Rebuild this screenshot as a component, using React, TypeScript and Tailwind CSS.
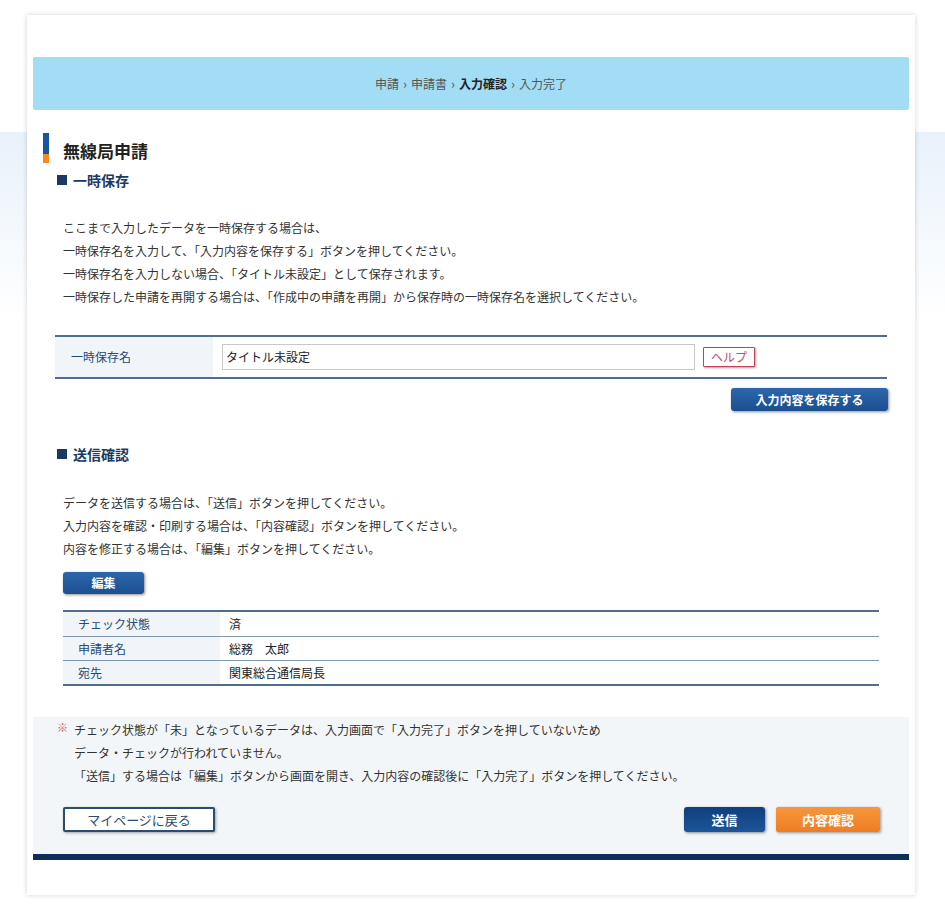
import React from 'react';

const font = { fontFamily: '"Noto Sans CJK JP", "Noto Sans", sans-serif' };

const SectionHeading = ({ children }: { children: React.ReactNode }) => (
  <div className="flex items-center h-[18px] pl-[24px]">
    <span className="w-[10px] h-[10px] bg-[#1b3a63] mr-[6px]" />
    <span className="text-[14px] font-bold text-[#1b3a63] leading-none">{children}</span>
  </div>
);

const rows = [
  { label: 'チェック状態', value: '済' },
  { label: '申請者名', value: '総務　太郎' },
  { label: '宛先', value: '関東総合通信局長' },
];

export default function App() {
  return (
    <div
      className="min-h-[921px] pt-[15px] pb-[25px] bg-[linear-gradient(to_bottom,#ffffff_0px,#ffffff_132px,#e8f1fb_132px,#ffffff_320px)] text-[#333]"
      style={font}
    >
      <div className="ml-[27px] w-[888px] bg-white shadow-[0_0_5px_rgba(0,0,0,0.18)] px-[6px] pt-[42px] pb-[35px]">
        {/* breadcrumb */}
        <div className="h-[53px] bg-[#a3dcf5] rounded-[2px] flex items-center justify-center text-[12px] text-[#555] gap-[4px]">
          <span>申請</span>
          <span className="text-[13px]">›</span>
          <span>申請書</span>
          <span className="text-[13px]">›</span>
          <span className="text-[#222] font-bold">入力確認</span>
          <span className="text-[13px]">›</span>
          <span>入力完了</span>
        </div>

        {/* title */}
        <div className="mt-[23px] flex items-center h-[30px] pl-[10px]">
          <div className="w-[6px] h-[30px] flex flex-col">
            <div className="flex-1 bg-[#1557a0]" />
            <div className="h-[9px] bg-[#f58a1f]" />
          </div>
          <h1 className="ml-[14px] text-[17px] font-bold text-[#222] pt-[6px]">無線局申請</h1>
        </div>

        <div className="mt-[8px]">
          <SectionHeading>一時保存</SectionHeading>
        </div>

        <div className="mt-[27px] pl-[30px] text-[12px] leading-[23px] text-[#333]">
          <p>ここまで入力したデータを一時保存する場合は、</p>
          <p>一時保存名を入力して、「入力内容を保存する」ボタンを押してください。</p>
          <p>一時保存名を入力しない場合、「タイトル未設定」として保存されます。</p>
          <p>一時保存した申請を再開する場合は、「作成中の申請を再開」から保存時の一時保存名を選択してください。</p>
        </div>

        <div className="mt-[27px] mx-[22px] border-t-2 border-b-2 border-[#4f6e8f] flex h-[44px]">
          <div className="w-[158px] bg-[#f1f5f9] flex items-center pl-[16px] text-[12px] text-[#264a74]">
            一時保存名
          </div>
          <div className="flex items-center pl-[9px]">
            <div className="w-[473px] h-[26px] border border-[#c8c8c8] flex items-center px-[3px] text-[12px] text-[#222]">
              タイトル未設定
            </div>
            <button className="ml-[8px] w-[52px] h-[20px] border border-[#c2415f] bg-white text-[#d04a6a] text-[12px] leading-none rounded-[1px] shadow-[1px_1px_2px_rgba(160,40,70,0.5)]">
              ヘルプ
            </button>
          </div>
        </div>

        <div className="mt-[9px] flex justify-end pr-[21px]">
          <button className="w-[157px] h-[23px] rounded-[3px] bg-[linear-gradient(to_bottom,#2c66ac,#1b4f90)] text-white text-[12px] font-bold shadow-[1px_1px_3px_rgba(0,0,0,0.45)]">
            入力内容を保存する
          </button>
        </div>

        <div className="mt-[34px]">
          <SectionHeading>送信確認</SectionHeading>
        </div>

        <div className="mt-[28px] pl-[30px] text-[12px] leading-[23px] text-[#333]">
          <p>データを送信する場合は、「送信」ボタンを押してください。</p>
          <p>入力内容を確認・印刷する場合は、「内容確認」ボタンを押してください。</p>
          <p>内容を修正する場合は、「編集」ボタンを押してください。</p>
        </div>

        <div className="mt-[9px] pl-[30px]">
          <button className="w-[81px] h-[22px] rounded-[3px] bg-[linear-gradient(to_bottom,#2c66ac,#1b4f90)] text-white text-[12px] font-bold shadow-[1px_1px_3px_rgba(0,0,0,0.45)]">
            編集
          </button>
        </div>

        <div className="mt-[16px] mx-[30px] border-t-2 border-b-2 border-[#4f6e8f]">
          {rows.map((r, i) => (
            <div
              key={r.label}
              className={`flex h-[24px] text-[12px] ${i > 0 ? 'border-t border-[#7f97ae]' : ''}`}
            >
              <div className="w-[157px] bg-[#f1f5f9] flex items-center pl-[15px] text-[#264a74]">{r.label}</div>
              <div className="flex items-center pl-[9px] text-[#222]">{r.value}</div>
            </div>
          ))}
        </div>

        {/* footer */}
        <div className="mt-[31px] bg-[#f3f6f9] pt-[1px] pb-[22px] px-[24px]">
          <div className="flex text-[12px] leading-[23px] text-[#333]">
            <span className="w-[17px] text-[#e0505a] text-[11px] leading-[18px]">※</span>
            <div>
              <p>チェック状態が「未」となっているデータは、入力画面で「入力完了」ボタンを押していないため</p>
              <p>データ・チェックが行われていません。</p>
              <p>「送信」する場合は「編集」ボタンから画面を開き、入力内容の確認後に「入力完了」ボタンを押してください。</p>
            </div>
          </div>
          <div className="mt-[20px] flex items-center pl-[6px] pr-[5px]">
            <button className="w-[152px] h-[25px] bg-white border-2 border-[#2d4b6f] rounded-[2px] text-[13px] text-[#2d4b6f] shadow-[1px_1px_3px_rgba(0,0,0,0.35)]">
              マイページに戻る
            </button>
            <div className="ml-auto flex gap-[11px]">
              <button className="w-[81px] h-[25px] rounded-[3px] bg-[linear-gradient(to_bottom,#0e3f7e,#1d5598)] text-white text-[13px] font-bold shadow-[1px_1px_3px_rgba(0,0,0,0.45)]">
                送信
              </button>
              <button className="w-[104px] h-[25px] rounded-[2px] bg-[linear-gradient(to_bottom,#f8953b,#ee7d25)] text-white text-[13px] font-bold shadow-[1px_1px_3px_rgba(0,0,0,0.4)]">
                内容確認
              </button>
            </div>
          </div>
        </div>
        <div className="h-[6px] bg-[#0e2f5a]" />
      </div>
    </div>
  );
}
